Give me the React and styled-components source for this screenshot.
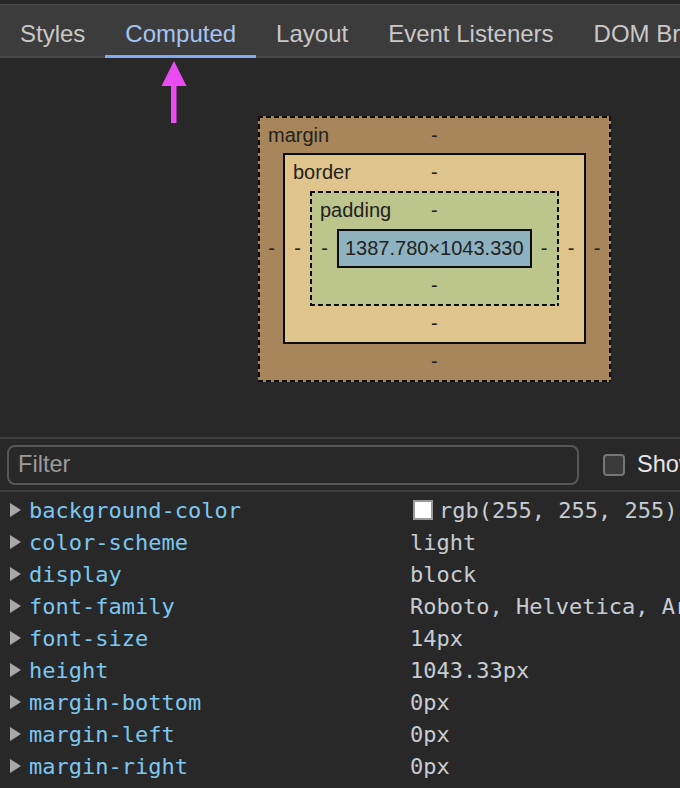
import React from 'react';
import styled, { createGlobalStyle } from 'styled-components';

const Global = createGlobalStyle`
  html, body { margin: 0; padding: 0; background: #282828; overflow: hidden; }
  #root { width: 680px; height: 788px; overflow: hidden; }
`;

const Panel = styled.div`
  width: 680px;
  height: 788px;
  overflow: hidden;
  display: flex;
  flex-direction: column;
  background: #282828;
  padding-top: 4px;
  box-sizing: border-box;
`;

const TabBar = styled.div`
  display: flex;
  flex: none;
  height: 54px;
  box-sizing: border-box;
  background: #3c3c3c;
  border-top: 1px solid #4b4b4b;
  box-shadow: inset 0 -2px 0 #4a4a4a;
  white-space: nowrap;
`;

const Tab = styled.div`
  flex: none;
  display: flex;
  align-items: center;
  padding: 8px 20px 0;
  box-sizing: border-box;
  font-family: "Liberation Sans", Arial, sans-serif;
  font-size: 24px;
  color: ${p => (p.$active ? '#a6c4f6' : '#c8c8c8')};
  border-bottom: 3px solid ${p => (p.$active ? '#7eaaf3' : 'transparent')};
`;

const ModelArea = styled.div`
  position: relative;
  flex: none;
  height: 381px;
  display: flex;
  align-items: center;
  padding: 2px 0 0 258px;
  box-sizing: border-box;
  border-bottom: 2px solid #3d3d3d;
`;

const Pointer = styled.svg`
  position: absolute;
  left: 160px;
  top: 3px;
`;

const dashes = (dir) =>
  `repeating-linear-gradient(${dir}, #0c0c0c 0 5px, transparent 5px 8px)`;

const Layer = styled.div`
  display: grid;
  grid-template-columns: ${p => p.$side}px auto ${p => p.$side}px;
  grid-template-rows: ${p => p.$top}px auto 36px;
  box-sizing: border-box;
  font-family: "Liberation Sans", Arial, sans-serif;
  font-size: 20px;
  color: #222;
  border: 2px solid ${p => (p.$dashed ? 'transparent' : '#0c0c0c')};
  background-color: ${p => p.$bg};
  ${p =>
    p.$dashed &&
    `
    background-image: ${dashes('90deg')}, ${dashes('90deg')}, ${dashes('180deg')}, ${dashes('180deg')};
    background-size: 100% 2px, 100% 2px, 2px 100%, 2px 100%;
    background-position: left top, left bottom, left top, right top;
    background-repeat: no-repeat;
    background-origin: border-box;
  `}
`;

const TopRow = styled.div`
  grid-column: 1 / -1;
  display: grid;
  grid-template-columns: 1fr auto 1fr;
  align-items: center;
`;

const Label = styled.span`
  margin-left: 8px;
`;

const Cell = styled.div`
  display: flex;
  align-items: center;
  justify-content: center;
`;

const BottomRow = styled(Cell)`
  grid-column: 1 / -1;
`;

const Content = styled.div`
  background: #8fb2c0;
  border: 2px solid #0c0c0c;
  padding: 0 6px;
  height: 39px;
  box-sizing: border-box;
  display: flex;
  align-items: center;
  font-family: "Liberation Sans", Arial, sans-serif;
  font-size: 20px;
  color: #222;
  white-space: nowrap;
`;

const FilterBar = styled.div`
  flex: none;
  display: flex;
  align-items: center;
  height: 53px;
  padding: 0 7px;
  box-sizing: border-box;
  border-bottom: 2px solid #3d3d3d;
  white-space: nowrap;
`;

const FilterInput = styled.div`
  flex: none;
  width: 572px;
  height: 40px;
  box-sizing: border-box;
  border: 2px solid #575757;
  border-radius: 8px;
  display: flex;
  align-items: center;
  padding-left: 9px;
  font-family: "Liberation Sans", Arial, sans-serif;
  font-size: 23.6px;
  color: #9b9b9b;
`;

const Check = styled.div`
  flex: none;
  width: 22px;
  height: 22px;
  box-sizing: border-box;
  margin-left: 24px;
  border: 2px solid #767676;
  border-radius: 4px;
  background: #3b3b3b;
`;

const CheckLabel = styled.span`
  margin-left: 12px;
  font-family: "Liberation Sans", Arial, sans-serif;
  font-size: 23.6px;
  color: #e6e6e6;
`;

const List = styled.div`
  display: flex;
  flex-direction: column;
  padding-top: 2px;
`;

const Row = styled.div`
  display: grid;
  grid-template-columns: 29px 381px auto;
  align-items: center;
  height: 32px;
  white-space: nowrap;
  font-family: "DejaVu Sans Mono", "Liberation Mono", monospace;
  font-size: 22px;
`;

const Caret = styled.span`
  width: 0;
  height: 0;
  margin-left: 10px;
  border-top: 7px solid transparent;
  border-bottom: 7px solid transparent;
  border-left: 11px solid #a8a8a8;
`;

const Name = styled.span`
  color: #7cc7f0;
`;

const Value = styled.span`
  color: #c6ccd3;
  display: flex;
  align-items: center;
`;

const Swatch = styled.span`
  width: 20px;
  height: 20px;
  box-sizing: border-box;
  margin: 0 6px 0 3px;
  background: #fff;
  border: 2px solid #9a9a9a;
`;

const tabs = ['Styles', 'Computed', 'Layout', 'Event Listeners', 'DOM Breakpoints', 'Properties'];

const props = [
  ['background-color', 'rgb(255, 255, 255)', true],
  ['color-scheme', 'light'],
  ['display', 'block'],
  ['font-family', 'Roboto, Helvetica, Arial, sans-serif'],
  ['font-size', '14px'],
  ['height', '1043.33px'],
  ['margin-bottom', '0px'],
  ['margin-left', '0px'],
  ['margin-right', '0px'],
];

function Box({ label, bg, dashed, side, top = 36, children }) {
  return (
    <Layer $bg={bg} $dashed={dashed} $side={side} $top={top}>
      <TopRow>
        <Label>{label}</Label>
        <span>-</span>
        <span />
      </TopRow>
      <Cell>-</Cell>
      <div>{children}</div>
      <Cell>-</Cell>
      <BottomRow>-</BottomRow>
    </Layer>
  );
}

export default function App() {
  return (
    <>
      <Global />
      <Panel>
        <TabBar>
          {tabs.map(t => (
            <Tab key={t} $active={t === 'Computed'}>{t}</Tab>
          ))}
        </TabBar>
        <ModelArea>
          <Pointer width="28" height="66" viewBox="0 0 28 66">
            <polygon points="14,0 1.5,25 26.5,25" fill="#ea4cf2" />
            <rect x="11" y="24" width="5.5" height="38" fill="#ea4cf2" />
          </Pointer>
          <Box label="margin" bg="#a7865b" dashed side={23} top={35}>
            <Box label="border" bg="#dfc48b" side={25}>
              <Box label="padding" bg="#bcc58b" dashed side={25}>
                <Content>1387.780×1043.330</Content>
              </Box>
            </Box>
          </Box>
        </ModelArea>
        <FilterBar>
          <FilterInput>Filter</FilterInput>
          <Check />
          <CheckLabel>Show all</CheckLabel>
        </FilterBar>
        <List>
          {props.map(([n, v, sw]) => (
            <Row key={n}>
              <Caret />
              <Name>{n}</Name>
              <Value>
                {sw && <Swatch />}
                {v}
              </Value>
            </Row>
          ))}
        </List>
      </Panel>
    </>
  );
}
